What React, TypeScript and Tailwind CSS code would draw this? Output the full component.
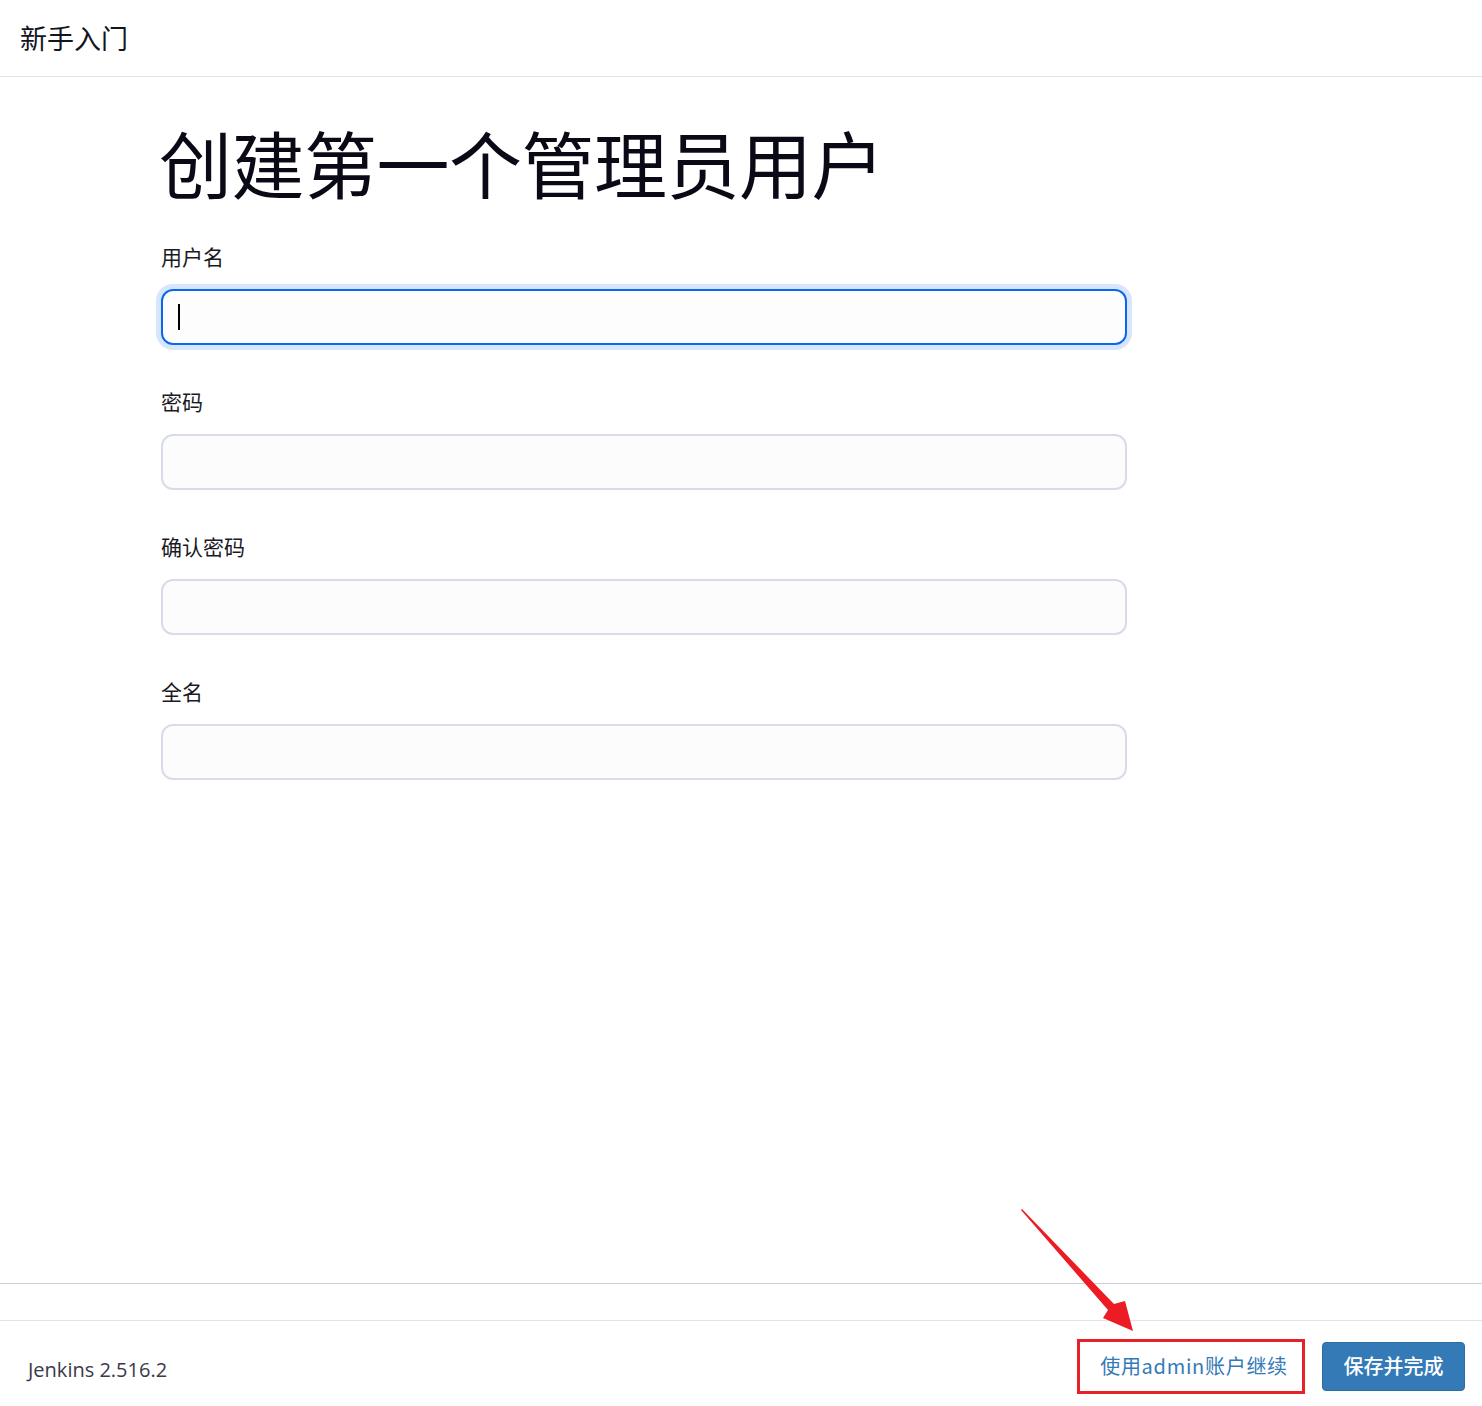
import React from "react";

const cjk = { fontFamily: '"Noto Sans CJK SC", "Noto Sans", sans-serif' };

function Field({ label, focused }: { label: string; focused?: boolean }) {
  return (
    <div className="flex flex-col">
      <label className="text-[21px] leading-[28px] text-[#1a1a24] h-[28px] mb-[19px]">{label}</label>
      <div
        className={
          focused
            ? "w-[966px] h-[56px] rounded-[12px] border-2 border-[#0a68f0] bg-[#fdfdfd] ring-[5px] ring-[#d7e6fc] flex items-center pl-[15px]"
            : "w-[966px] h-[56px] rounded-[12px] border-2 border-[#d7dce8] bg-[#fcfcfd]"
        }
      >
        {focused && <span className="block w-[2px] h-[26px] bg-black" />}
      </div>
    </div>
  );
}

export default function App() {
  return (
    <div className="relative w-[1482px] h-[1406px] bg-white flex flex-col" style={cjk}>
      <header className="h-[77px] border-b border-[#e4e4e8] flex items-center pl-[20px]">
        <span className="text-[27px] text-[#14141f] leading-none mt-[-2px]">新手入门</span>
      </header>
      <main className="h-[1207px] border-b border-[#cfcfd3] pl-[161px] pt-[39px]">
        <h1 className="text-[73px] leading-[90px] text-[#0a0a16] font-normal tracking-[-0.5px] ml-[-2px]">创建第一个管理员用户</h1>
        <div className="mt-[36px] flex flex-col gap-[42px]">
          <Field label="用户名" focused />
          <Field label="密码" />
          <Field label="确认密码" />
          <Field label="全名" />
        </div>
      </main>
      <div className="h-[36px]" />
      <footer className="flex-1 border-t border-[#e4e4e8] flex items-center justify-between pl-[28px] pr-[17px]">
        <span className="text-[20px] text-[#3a3a48] mt-[12px]" style={{ fontFamily: '"Open Sans", "Noto Sans", sans-serif' }}>
          Jenkins 2.516.2
        </span>
        <div className="flex items-center gap-[17px] mt-[5px]">
          <div className="w-[228px] h-[55px] border-[3px] border-[#e8202a] flex items-center justify-center">
            <span className="text-[20px] text-[#337ab7] ml-[6px] tracking-[0.7px]">使用admin账户继续</span>
          </div>
          <button className="w-[143px] h-[49px] rounded-[4px] bg-[#337ab7] border border-[#2e6da4] text-white text-[20px] font-medium">
            保存并完成
          </button>
        </div>
      </footer>
      <svg className="absolute left-0 top-0 pointer-events-none" width="1482" height="1406">
        <polygon
          points="1021,1210 1022,1209 1114,1304 1125,1301 1133,1331 1103,1318 1108,1310"
          fill="#ec1c24"
        />
      </svg>
    </div>
  );
}
